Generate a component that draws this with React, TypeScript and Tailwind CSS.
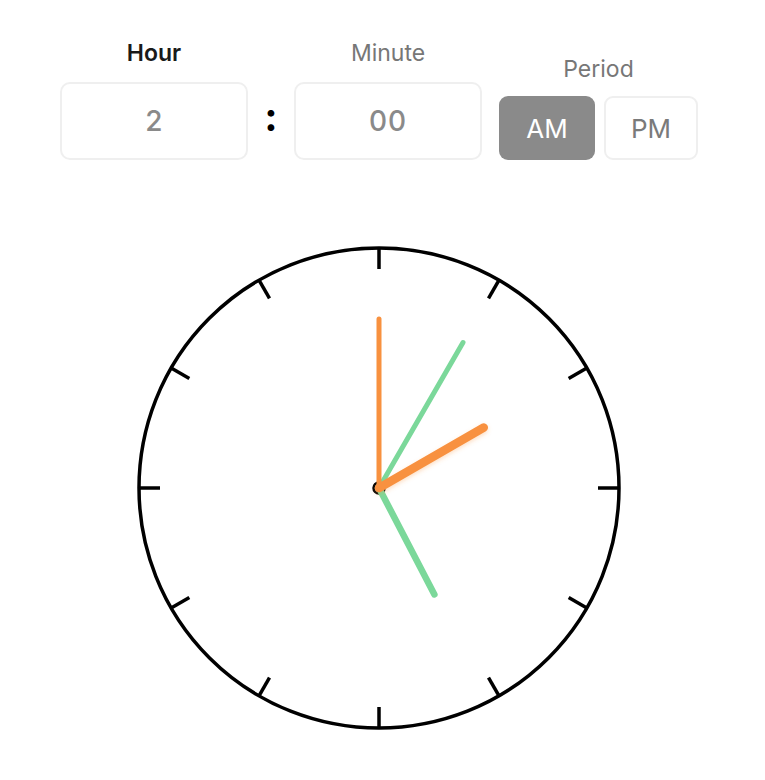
import React from "react";

const ticks = Array.from({ length: 12 }, (_, i) => i * 30);

function Clock() {
  const c = 245;
  const R = 240;
  const pt = (deg: number, len: number) => {
    const a = (deg * Math.PI) / 180;
    return { x: c + Math.sin(a) * len, y: c - Math.cos(a) * len };
  };
  const h = pt(60, 121);
  const m = pt(0, 169);
  const g1 = pt(30, 168);
  const g2 = pt(152.5, 120);
  return (
    <svg width="490" height="490" viewBox="0 0 490 490">
      <defs>
        <filter id="sh" x="-20%" y="-20%" width="140%" height="140%">
          <feDropShadow dx="0" dy="2" stdDeviation="2" floodColor="#f89440" floodOpacity="0.3" />
        </filter>
      </defs>
      <circle cx={c} cy={c} r={R} fill="none" stroke="#000" strokeWidth="3.5" />
      {ticks.map((d) => {
        const a = pt(d, R);
        const b = pt(d, R - 21);
        return <line key={d} x1={a.x} y1={a.y} x2={b.x} y2={b.y} stroke="#000" strokeWidth="3.5" />;
      })}
      <circle cx={c} cy={c} r="5.5" fill="none" stroke="#000" strokeWidth="2.5" />
      <line x1={c} y1={c} x2={g1.x} y2={g1.y} stroke="#7bd89a" strokeWidth="5" strokeLinecap="round" />
      <line x1={c} y1={c} x2={g2.x} y2={g2.y} stroke="#7bd89a" strokeWidth="6.5" strokeLinecap="round" />
      <line x1={c} y1={c} x2={m.x} y2={m.y} stroke="#f8913f" strokeWidth="5" strokeLinecap="round" />
      <line x1={c} y1={c} x2={h.x} y2={h.y} stroke="#f8913f" strokeWidth="8.5" strokeLinecap="round" filter="url(#sh)" />
    </svg>
  );
}

export default function App() {
  return (
    <div
      className="w-[765px] h-[780px] bg-white relative"
      style={{ fontFamily: "Inter, 'Noto Sans', sans-serif" }}
    >
      <div className="flex items-end pl-[60px] pt-[40px]">
        <div className="flex flex-col items-center w-[188px] gap-[16px]">
          <div className="text-[23px] leading-[26px] font-semibold text-[#1a1a1a]">Hour</div>
          <div className="w-[188px] h-[78px] rounded-[10px] border-2 border-[#efefef] flex items-center justify-center text-[28px] font-medium text-[#8a8a8a]">
            2
          </div>
        </div>
        <div className="w-[46px] h-[78px] flex items-center justify-center text-[40px] font-bold text-black leading-none pb-[8px]">
          :
        </div>
        <div className="flex flex-col items-center w-[188px] gap-[16px]">
          <div className="text-[23px] leading-[26px] font-normal text-[#777]">Minute</div>
          <div className="w-[188px] h-[78px] rounded-[10px] border-2 border-[#efefef] flex items-center justify-center text-[28px] font-medium text-[#8a8a8a] tracking-[1px]">
            00
          </div>
        </div>
        <div className="flex flex-col items-center ml-[17px] gap-[14px]">
          <div className="text-[23px] leading-[26px] text-[#777]">Period</div>
          <div className="flex gap-[9px]">
            <div className="w-[96px] h-[64px] rounded-[9px] bg-[#8a8a8a] text-white flex items-center justify-center text-[26px]">
              AM
            </div>
            <div className="w-[94px] h-[64px] rounded-[9px] border-2 border-[#efefef] text-[#7a7a7a] flex items-center justify-center text-[26px]">
              PM
            </div>
          </div>
        </div>
      </div>
      <div className="pl-[134px] mt-[83px]">
        <Clock />
      </div>
    </div>
  );
}
